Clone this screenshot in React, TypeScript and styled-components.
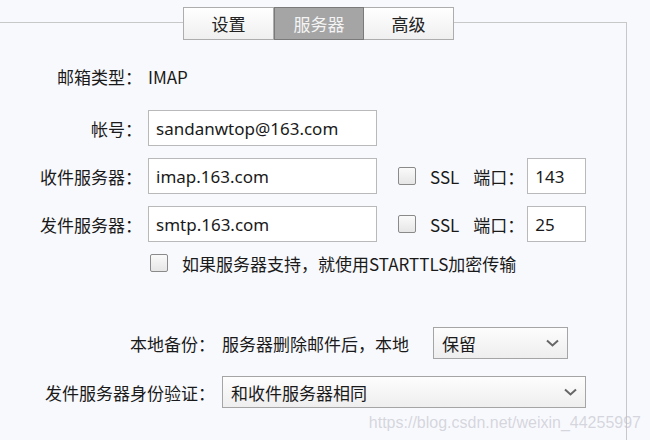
import styled, { createGlobalStyle } from "styled-components";

const Global = createGlobalStyle`
  body {
    margin: 0;
    background: #f8f9fd;
    font-family: "Noto Sans CJK SC", "Noto Sans", sans-serif;
    color: #1a1a1a;
  }
`;

const Page = styled.div`
  width: 650px;
  height: 440px;
  overflow: hidden;
  position: relative;
`;

const TabBar = styled.div`
  display: flex;
  margin: 7px 0 0 183px;
  position: relative;
  z-index: 1;
`;

const Tab = styled.div<{ $active?: boolean }>`
  width: ${(p) => (p.$active ? 88 : 89)}px;
  height: 31px;
  display: flex;
  align-items: center;
  justify-content: center;
  font-size: 17px;
  border: 1px solid ${(p) => (p.$active ? "#7a7a7a" : "#adadad")};
  border-left-width: ${(p) => (p.$active ? 1 : 0)}px;
  background: ${(p) => (p.$active ? "#a5a5a5" : "linear-gradient(#ffffff, #efefef)")};
  color: ${(p) => (p.$active ? "#f4f4f4" : "#222")};
  &:first-child {
    border-left-width: 1px;
  }
`;

const Panel = styled.div`
  margin-top: -18px;
  width: 627px;
  height: 420px;
  border-top: 1px solid #c8c8c8;
  border-right: 1px solid #c8c8c8;
  box-sizing: border-box;
  padding-top: 35px;
`;

const Form = styled.div`
  display: flex;
  flex-direction: column;
`;

const Row = styled.div<{ $mt?: number }>`
  display: flex;
  align-items: center;
  height: 36px;
  margin-top: ${(p) => p.$mt ?? 0}px;
  font-size: 17px;
`;

const Label = styled.div<{ $w?: number }>`
  width: ${(p) => p.$w ?? 142}px;
  text-align: right;
  margin-right: ${(p) => (p.$w ? 7 : 6)}px;
  flex-shrink: 0;
`;

const Input = styled.div<{ $w: number }>`
  width: ${(p) => p.$w}px;
  height: 36px;
  box-sizing: border-box;
  border: 1px solid #b9b9b9;
  background: #fff;
  display: flex;
  align-items: center;
  padding-left: 7px;
  font-size: 17px;
  font-family: "Noto Sans", "Noto Sans CJK SC", sans-serif;
`;

const Check = styled.div<{ $ml: number }>`
  width: 18px;
  height: 18px;
  box-sizing: border-box;
  border: 1px solid #8a8a8a;
  border-radius: 2px;
  background: linear-gradient(#fafafa, #e6e6e6);
  margin-left: ${(p) => p.$ml}px;
  margin-right: 14px;
  flex-shrink: 0;
`;

const Text = styled.span<{ $mr?: number }>`
  margin-right: ${(p) => p.$mr ?? 0}px;
`;

const Select = styled.div<{ $w: number; $ml?: number }>`
  width: ${(p) => p.$w}px;
  margin-left: ${(p) => p.$ml ?? 0}px;
  height: 32px;
  box-sizing: border-box;
  border: 1px solid #a5a5a5;
  background: linear-gradient(#fdfdfd, #eeeeee);
  display: flex;
  align-items: center;
  justify-content: space-between;
  padding: 0 8px;
  font-size: 17px;
`;

const Watermark = styled.div`
  position: absolute;
  right: 9px;
  bottom: 8px;
  font-family: "Liberation Sans", sans-serif;
  font-size: 16px;
  color: rgba(190, 190, 200, 0.6);
`;

const Chevron = () => (
  <svg width="13" height="8" viewBox="0 0 13 8">
    <path d="M1 1.5 L6.5 6.5 L12 1.5" fill="none" stroke="#666" strokeWidth="2" />
  </svg>
);

export default function App() {
  return (
    <Page>
      <Global />
      <TabBar>
        <Tab>设置</Tab>
        <Tab $active>服务器</Tab>
        <Tab>高级</Tab>
      </TabBar>
      <Panel>
        <Form>
          <Row>
            <Label>邮箱类型：</Label>
            <Text>IMAP</Text>
          </Row>
          <Row $mt={16}>
            <Label>帐号：</Label>
            <Input $w={229}>sandanwtop@163.com</Input>
          </Row>
          <Row $mt={12}>
            <Label>收件服务器：</Label>
            <Input $w={229}>imap.163.com</Input>
            <Check $ml={21} />
            <Text $mr={14}>SSL</Text>
            <Text $mr={3}>端口：</Text>
            <Input $w={59}>143</Input>
          </Row>
          <Row $mt={12}>
            <Label>发件服务器：</Label>
            <Input $w={229}>smtp.163.com</Input>
            <Check $ml={21} />
            <Text $mr={14}>SSL</Text>
            <Text $mr={3}>端口：</Text>
            <Input $w={59}>25</Input>
          </Row>
          <Row $mt={3}>
            <Check $ml={150} />
            <Text>如果服务器支持，就使用STARTTLS加密传输</Text>
          </Row>
          <Row $mt={44}>
            <Label $w={215}>本地备份：</Label>
            <Text>服务器删除邮件后，本地</Text>
            <Select $w={135} $ml={24}>
              保留
              <Chevron />
            </Select>
          </Row>
          <Row $mt={13}>
            <Label $w={215}>发件服务器身份验证：</Label>
            <Select $w={364}>
              和收件服务器相同
              <Chevron />
            </Select>
          </Row>
        </Form>
      </Panel>
      <Watermark>https://blog.csdn.net/weixin_44255997</Watermark>
    </Page>
  );
}
